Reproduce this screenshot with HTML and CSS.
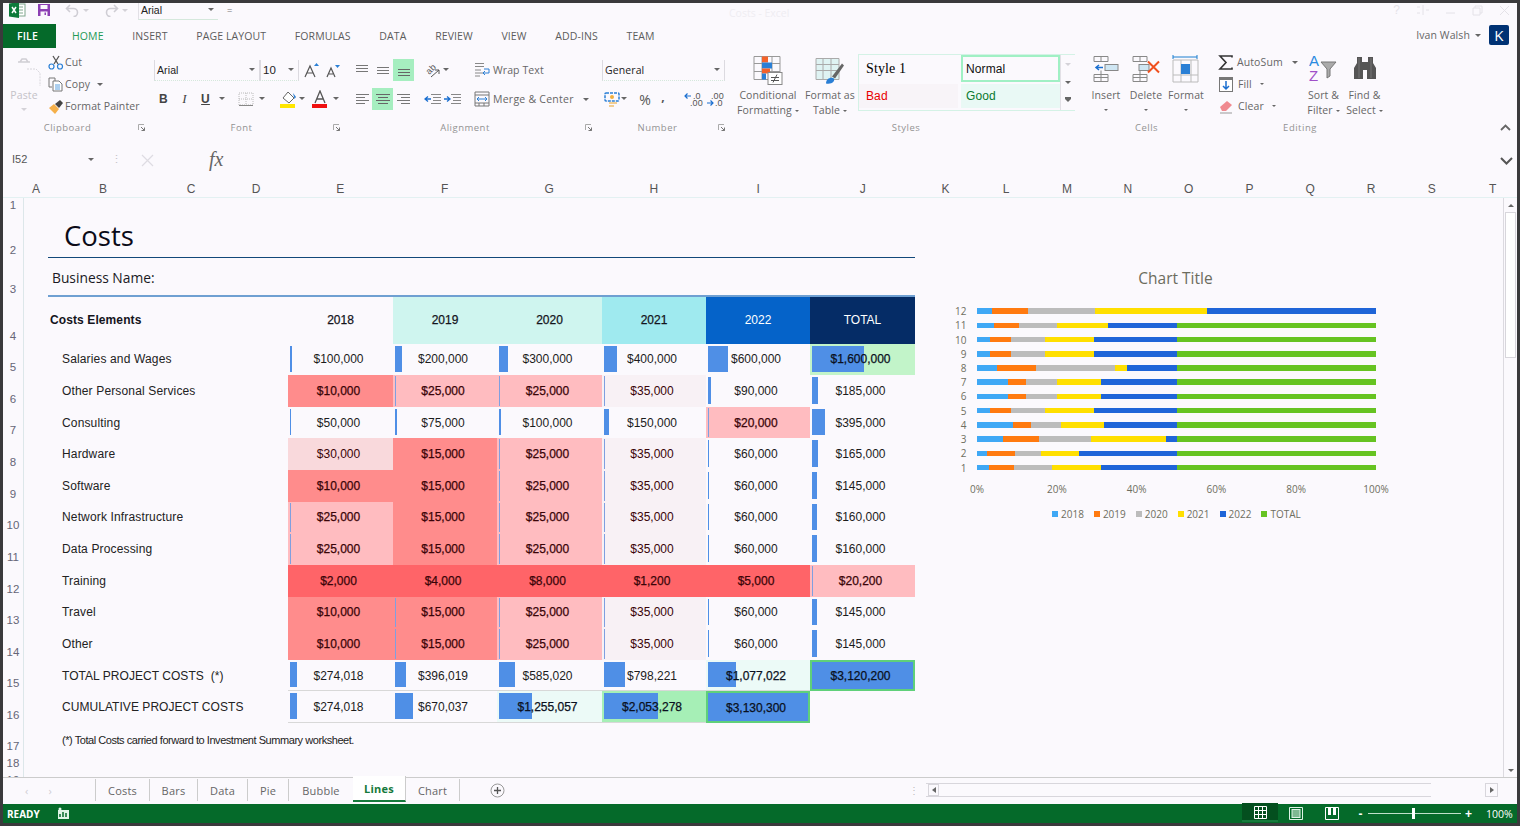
FILE: index.html
```html
<!DOCTYPE html>
<html lang="en">
<head>
<meta charset="utf-8">
<title>Costs - Excel</title>
<link rel="stylesheet" href="styles.css">
</head>
<body>
<div class="win">

<header class="titlebar">
  <svg class="q-excel" width="17" height="16" viewBox="0 0 17 16"><rect x="8" y="2" width="8" height="12" fill="#fff" stroke="#7fa58c"/><path d="M10 5h4M10 8h4M10 11h4" stroke="#7fa58c"/><path d="M0 1.500 10 0v16L0 14.500z" fill="#0d7a3a"/><path d="M3 5l4 6M7 5l-4 6" stroke="#fff" stroke-width="1.500"/></svg>
  <svg class="q-save" width="14" height="14" viewBox="0 0 14 14"><path d="M1 1h12v12H1z" fill="#8c3fb3"/><rect x="3.500" y="2" width="7" height="4" fill="#fbf9fd"/><rect x="3.500" y="8.500" width="7" height="4.500" fill="#fbf9fd"/><rect x="7.500" y="9.500" width="1.500" height="2.500" fill="#8c3fb3"/></svg>
  <svg class="q-undo" width="15" height="13" viewBox="0 0 15 13"><path d="M5 1 1.500 4.500 5 8M2 4.500h6.500a4 4 0 0 1 0 8" fill="none" stroke="#cfcdd4" stroke-width="1.600"/></svg>
  <i class="caret pale q-c1"></i>
  <svg class="q-redo" width="15" height="13" viewBox="0 0 15 13"><path d="M10 1l3.500 3.500L10 8M13 4.500H6.500a4 4 0 0 0 0 8" fill="none" stroke="#cfcdd4" stroke-width="1.600"/></svg>
  <i class="caret pale q-c2"></i>
  <div class="q-font"><span>Arial</span><i class="caret"></i></div>
  <span class="q-more">=</span>
  <span class="doc-title">Costs - Excel</span>
  <div class="winbtns">
    <span>?</span>
    <svg width="13" height="10" viewBox="0 0 13 10"><path d="M1 2h3M1 8h3M7 0v10M10 5h3" stroke="#e4e2e8"/></svg>
    <svg width="11" height="10" viewBox="0 0 11 10"><path d="M1 8h9" stroke="#e4e2e8"/></svg>
    <svg width="11" height="11" viewBox="0 0 11 11"><path d="M1 3h7v7H1zM3 3V1h7v7H8" fill="none" stroke="#e4e2e8"/></svg>
    <svg width="11" height="11" viewBox="0 0 11 11"><path d="M1 1l9 9M10 1l-9 9" stroke="#e4e2e8"/></svg>
  </div>
</header>

<nav class="tabs">
  <span class="tab-file">FILE</span>
  <span class="tab home">HOME</span>
  <span class="tab">INSERT</span>
  <span class="tab">PAGE LAYOUT</span>
  <span class="tab">FORMULAS</span>
  <span class="tab">DATA</span>
  <span class="tab">REVIEW</span>
  <span class="tab">VIEW</span>
  <span class="tab">ADD-INS</span>
  <span class="tab">TEAM</span>
  <div class="user"><span>Ivan Walsh</span><i class="caret"></i><b class="avatar">K</b></div>
</nav>

<section class="ribbon">
  <div class="grp g-clip">
    <div class="gbody clip-body">
      <div class="paste">
        <svg width="30" height="33" viewBox="0 0 30 33"><path d="M6 8h12M8 8l2-3h4l2 3" fill="none" stroke="#d0ced4" stroke-width="1.500"/><path d="M15 15h9l4 4v13" fill="none" stroke="#d8d6dc" stroke-dasharray="2 1"/></svg>
        <span>Paste</span>
        <i class="caret pale"></i>
      </div>
      <div class="clip-list">
        <div class="li"><svg width="16" height="15" viewBox="0 0 16 15"><path d="M5 1l5 8M11 1 6 9" stroke="#555" stroke-width="1.300"/><circle cx="3.500" cy="11.500" r="2.500" fill="none" stroke="#2a7fd5" stroke-width="1.200"/><circle cx="12" cy="11.500" r="2.500" fill="none" stroke="#2a7fd5" stroke-width="1.200"/></svg><span>Cut</span></div>
        <div class="li"><svg width="16" height="15" viewBox="0 0 16 15"><path d="M1 1h6v3M1 1v9h3" fill="none" stroke="#777"/><path d="M5 4h6l3 3v7H5z" fill="#fff" stroke="#777"/><path d="M7 8h5M7 10h5M7 12h5" stroke="#5aa0e0"/></svg><span>Copy</span><i class="caret ml"></i></div>
        <div class="li"><svg width="16" height="15" viewBox="0 0 16 15"><path d="M1 9l5-4 5 5-4 5z" fill="#f5b04a"/><path d="M7 5l5-4 3 3-4 5z" fill="#444"/></svg><span>Format Painter</span></div>
      </div>
    </div>
    <div class="glabel launch"><span>Clipboard</span><svg class="launcher" width="7" height="7" viewBox="0 0 7 7"><path d="M.5 6V.5H6" fill="none" stroke="#aaa"/><path d="M3 3l3.500 3.500M6.500 3.500v3h-3" fill="none" stroke="#777"/></svg></div>
  </div>

  <div class="grp g-font">
    <div class="gbody two">
      <div class="r r-font1">
        <div class="box b-font"><span>Arial</span><i class="caret"></i></div>
        <div class="box b-size"><span>10</span><i class="caret"></i></div>
        <svg class="grow" width="16" height="15" viewBox="0 0 16 15"><path d="M1 14 6 3l5 11M3 10h6" fill="none" stroke="#555" stroke-width="1.200"/><path d="M10 3l2.500-3L15 3z" fill="#2a7fd5"/></svg>
        <svg class="shrink" width="14" height="13" viewBox="0 0 14 13"><path d="M1 12l4-9 4 9M3 9h4" fill="none" stroke="#555" stroke-width="1.200"/><path d="M9 0h5l-2.500 3z" fill="#2a7fd5"/></svg>
      </div>
      <div class="r r-font2">
        <b class="btn fb">B</b><em class="btn fi">I</em><u class="btn fu">U</u><i class="caret cw12"></i>
        <svg class="i-border" width="20" height="16" viewBox="0 0 20 16"><path d="M3 2h14v12H3zM10 2v12M3 8h14" fill="none" stroke="#bbb" stroke-dasharray="1 1"/><path d="M3 14.500h14" stroke="#888"/></svg><i class="caret cw12"></i>
        <svg class="i-fill" width="20" height="19" viewBox="0 0 20 19"><path d="M5 8l5-6 6 6-5 5z" fill="#fff" stroke="#666"/><path d="M15 3l3 4-1.500 2z" fill="#2a7fd5"/><rect x="2" y="14" width="15" height="4" fill="#ffe600"/></svg><i class="caret cw10"></i>
        <svg class="i-color" width="20" height="19" viewBox="0 0 20 19"><path d="M5 13 10 1l5 12M7 9h6" fill="none" stroke="#555" stroke-width="1.300"/><rect x="2" y="14" width="15" height="4" fill="#f01010"/></svg><i class="caret cw12"></i>
      </div>
    </div>
    <div class="glabel launch"><span>Font</span><svg class="launcher" width="7" height="7" viewBox="0 0 7 7"><path d="M.5 6V.5H6" fill="none" stroke="#aaa"/><path d="M3 3l3.500 3.500M6.500 3.500v3h-3" fill="none" stroke="#777"/></svg></div>
  </div>

  <div class="grp g-align">
    <div class="gbody two">
      <div class="r r-al">
        <span class="btn"><svg width="14" height="10" viewBox="0 0 14 10"><path d="M1 .5h12M1 3.500h12M1 6.500h12" stroke="#777"/></svg></span>
        <span class="btn"><svg width="14" height="10" viewBox="0 0 14 10"><path d="M1 2.500h12M1 5.500h12M1 8.500h12" stroke="#777"/></svg></span>
        <span class="btn hl"><svg width="14" height="12" viewBox="0 0 14 12"><path d="M1 5.500h12M1 8.500h12M1 11.500h12" stroke="#666"/></svg></span>
        <svg class="i-orient" width="20" height="20" viewBox="-2 -4 20 20"><text x="2" y="9" transform="rotate(-45 6 6)" class="tiny ab">ab</text><path d="M7 13l8-7M15 6h-4M15 6v4" fill="none" stroke="#555"/></svg><i class="caret cw8"></i>
        <svg class="i-wrap" width="16" height="16" viewBox="0 0 16 16"><path d="M1 1.500h9M1 4.500h9M1 8h6M1 11h8M1 14h5" stroke="#888"/><path d="M10 7h5v4H9M11 9l-2 2 2 2" fill="none" stroke="#2a7fd5"/></svg>
        <span class="txt">Wrap Text</span>
      </div>
      <div class="r r-al">
        <span class="btn"><svg width="14" height="11" viewBox="0 0 14 11"><path d="M1 .5h13M1 3.500h9M1 6.500h13M1 9.500h9" stroke="#777"/></svg></span>
        <span class="btn hl"><svg width="14" height="11" viewBox="0 0 14 11"><path d="M0 .5h14M2 3.500h10M0 6.500h14M2 9.500h10" stroke="#666"/></svg></span>
        <span class="btn"><svg width="14" height="11" viewBox="0 0 14 11"><path d="M0 .5h13M4 3.500h9M0 6.500h13M4 9.500h9" stroke="#777"/></svg></span>
        <svg class="i-ded" width="18" height="11" viewBox="0 0 18 11"><path d="M7 .5h10M9 3.500h8M9 6.500h8M7 9.500h10" stroke="#888"/><path d="M7 5H1M4 2.500 1 5l3 2.500" fill="none" stroke="#1a6fd0" stroke-width="1.300"/></svg>
        <svg class="i-ind" width="18" height="11" viewBox="0 0 18 11"><path d="M7 .5h10M9 3.500h8M9 6.500h8M7 9.500h10" stroke="#888"/><path d="M0 5h6M3 2.500 6 5 3 7.500" fill="none" stroke="#1a6fd0" stroke-width="1.300"/></svg>
        <svg class="i-merge" width="16" height="16" viewBox="0 0 16 16"><path d="M1 1h14v14H1zM1 4h14M1 12h14M5 12v3M10 12v3" fill="none" stroke="#777"/><path d="M3 8h10M5 6 3 8l2 2M11 6l2 2-2 2" fill="none" stroke="#2a7fd5"/></svg>
        <span class="txt wide">Merge &amp; Center</span><i class="caret c-merge"></i>
      </div>
    </div>
    <div class="glabel launch"><span>Alignment</span><svg class="launcher" width="7" height="7" viewBox="0 0 7 7"><path d="M.5 6V.5H6" fill="none" stroke="#aaa"/><path d="M3 3l3.500 3.500M6.500 3.500v3h-3" fill="none" stroke="#777"/></svg></div>
  </div>

  <div class="grp g-num">
    <div class="gbody two">
      <div class="r r-num1"><div class="box b-gen"><span>General</span><i class="caret"></i></div></div>
      <div class="r r-num2">
        <svg class="i-cur" width="16" height="15" viewBox="0 0 16 15"><rect x="1" y="1" width="14" height="8" rx="1" fill="none" stroke="#2a7fd5" stroke-width="1.500" stroke-dasharray="3 1"/><circle cx="8" cy="5" r="2" fill="#f0b040"/><path d="M5 11h8M5 14h5" stroke="#f0c070" stroke-width="1.500"/></svg><i class="caret cw10"></i>
        <span class="pct">%</span><span class="comma">,</span>
        <svg class="i-inc" width="19" height="15" viewBox="0 0 19 15"><path d="M7 4H1M3.500 1.500 1 4l2.500 2.500" fill="none" stroke="#1a6fd0" stroke-width="1.200"/><text x="9" y="7" class="tiny">.0</text><text x="6" y="14" class="tiny">.00</text></svg>
        <svg class="i-dec" width="19" height="15" viewBox="0 0 19 15"><text x="5" y="7" class="tiny">.00</text><path d="M1 11h6M4.500 8.500 7 11l-2.500 2.500" fill="none" stroke="#1a6fd0" stroke-width="1.200"/><text x="9" y="14" class="tiny">.0</text></svg>
      </div>
    </div>
    <div class="glabel launch"><span>Number</span><svg class="launcher" width="7" height="7" viewBox="0 0 7 7"><path d="M.5 6V.5H6" fill="none" stroke="#aaa"/><path d="M3 3l3.500 3.500M6.500 3.500v3h-3" fill="none" stroke="#777"/></svg></div>
  </div>

  <div class="grp g-styles">
    <div class="gbody styles-body">
      <div class="big b-cf">
        <svg width="30" height="30" viewBox="0 0 30 30"><path d="M1 1h26v23H1zM1 8h26M1 16h26M9 1v23M19 1v23" fill="#fbf9fd" stroke="#999"/><rect x="9" y="1" width="6" height="6" fill="#f4622a"/><rect x="9" y="7" width="10" height="6" fill="#2a7fd5"/><rect x="9" y="13" width="8" height="5" fill="#f4622a"/><rect x="9" y="18" width="4" height="6" fill="#2a7fd5"/><rect x="15" y="17" width="14" height="12" fill="#fff" stroke="#888"/><path d="M18 22h8M18 25h8M24 19l-4 8" stroke="#555"/></svg>
        <span>Conditional</span><span>Formatting<i class="caret ins"></i></span>
      </div>
      <div class="big b-ft">
        <svg width="30" height="30" viewBox="0 0 30 30"><path d="M1 3h23v21H1zM1 9h23M1 15h23M8 3v21M16 3v21" fill="#dff3f3" stroke="#aaa"/><path d="M17 21 27 8l2 2-9 13z" fill="#666"/><path d="M11 28c0-5 5-7 8-5 1 3-2 6-8 5z" fill="#2a7fd5"/></svg>
        <span>Format as</span><span>Table<i class="caret ins"></i></span>
      </div>
      <div class="gallery">
        <div class="g-grid">
          <span class="st st1">Style 1</span>
          <span class="st st2">Normal</span>
          <span class="st st3">Bad</span>
          <span class="st st4">Good</span>
        </div>
        <div class="g-scroll"><i class="caret pale"></i><i class="caret"></i><i class="caret under"></i></div>
      </div>
    </div>
    <div class="glabel"><span>Styles</span></div>
  </div>

  <div class="grp g-cells">
    <div class="gbody cells-body">
      <div class="big"><svg width="26" height="27" viewBox="0 0 26 27"><path d="M1 1h14v5H1zM8 1v5M1 19h14v7H1zM8 15v11M1 22h14" fill="none" stroke="#888"/><rect x="12" y="9" width="13" height="6" fill="#cfe6f3" stroke="#888"/><path d="M10 12H3M6 9.500 3 12l3 2.500" fill="none" stroke="#1a6fd0" stroke-width="1.500"/></svg><span>Insert</span><i class="caret"></i></div>
      <div class="big"><svg width="28" height="27" viewBox="0 0 28 27"><path d="M1 1h14v5H1zM8 1v5M1 19h14v7H1zM8 15v11M1 22h14" fill="none" stroke="#888"/><rect x="7" y="9" width="10" height="6" fill="#cfe6f3" stroke="#888"/><path d="M16 6l11 11M27 6 16 17" stroke="#f0501e" stroke-width="2"/></svg><span>Delete</span><i class="caret"></i></div>
      <div class="big"><svg width="28" height="28" viewBox="0 0 28 28"><path d="M1 5h25v22H1zM9 5v22M19 5v22M1 20h25" fill="none" stroke="#bbb"/><rect x="9" y="9" width="9" height="10" fill="#2a7fd5"/><path d="M1 0v4M25 0v4M1 2h24" stroke="#1a7fd0"/></svg><span>Format</span><i class="caret"></i></div>
    </div>
    <div class="glabel"><span>Cells</span></div>
  </div>

  <div class="grp g-edit">
    <div class="gbody edit-body">
      <div class="edit-list">
        <div class="li e-sum"><svg width="16" height="15" viewBox="0 0 16 15"><path d="M14 2.500V1H2l6 6.500L2 14h12v-1.500" fill="none" stroke="#333" stroke-width="1.600"/></svg><span>AutoSum</span><i class="caret c-auto"></i></div>
        <div class="li e-fill"><svg width="14" height="15" viewBox="0 0 14 15"><rect x=".5" y=".5" width="13" height="14" fill="#fff" stroke="#777"/><path d="M.5 2h13" stroke="#777" stroke-width="2"/><path d="M7 4v8M4 9l3 3 3-3" fill="none" stroke="#1a6fd0" stroke-width="1.500"/></svg><span>Fill</span><i class="caret ins"></i></div>
        <div class="li e-fill"><svg width="14" height="15" viewBox="0 0 14 15"><path d="M1 8l7-6 5 4-6 6H3z" fill="#f08a90"/><path d="M1 14h12" stroke="#999"/></svg><span>Clear</span><i class="caret ins"></i></div>
      </div>
      <div class="big b-sort"><svg width="30" height="32" viewBox="0 -2 30 32"><text x="0" y="12" class="az a">A</text><text x="0" y="27" class="az z">Z</text><path d="M12 8h15l-6 7v7l-3 2v-9z" fill="#aaa" stroke="#777"/></svg><span>Sort &amp;</span><span>Filter<i class="caret ins"></i></span></div>
      <div class="big b-find"><svg width="26" height="26" viewBox="0 0 26 26"><path d="M5 2h5v5h6V2h5v6l3 5v11h-9v-9h-4v9H2V13l3-5z" fill="#555"/><path d="M7 3v20M19 3v20" stroke="#777"/></svg><span>Find &amp;</span><span>Select<i class="caret ins"></i></span></div>
    </div>
    <div class="glabel"><span>Editing</span></div>
  </div>

  <svg class="collapse" width="11" height="7" viewBox="0 0 11 7"><path d="M1 6l4.500-4.500L10 6" fill="none" stroke="#666" stroke-width="1.800"/></svg>
</section>

<section class="formula">
  <span class="namebox">I52</span><i class="caret nb-c"></i>
  <span class="fdots">⋮</span>
  <svg class="fx-x" width="13" height="13" viewBox="0 0 13 13"><path d="M1 1l11 11M12 1 1 12" stroke="#dedce2" stroke-width="1.200"/></svg>
  <span class="fx">fx</span>
  <svg class="fchev" width="13" height="8" viewBox="0 0 13 8"><path d="M1 1l5.500 5.500L12 1" fill="none" stroke="#555" stroke-width="2"/></svg>
</section>

<div class="colheads">
  <span class="ca">A</span><span class="cb">B</span><span class="cc">C</span><span class="cd">D</span>
  <span class="ce">E</span><span class="ce">F</span><span class="ce">G</span><span class="ce">H</span><span class="ce">I</span><span class="ce">J</span>
  <span class="ck">K</span><span class="ck">L</span><span class="ck">M</span><span class="ck">N</span><span class="ck">O</span><span class="ck">P</span><span class="ck">Q</span><span class="ck">R</span><span class="ck">S</span><span class="ck">T</span>
</div>

<main class="sheet">
  <div class="grid">
    <div class="rh">1</div>
    <div class="rh">2</div><div class="title">Costs</div>
    <div class="rh">3</div><div class="bizname">Business Name:</div>
    <div class="rh">4</div><div class="hl-label">Costs Elements</div>
    <div class="hd">2018</div><div class="hd h-mint">2019</div><div class="hd h-mint">2020</div><div class="hd h-aqua">2021</div><div class="hd h-blue">2022</div><div class="hd h-navy">TOTAL</div>

    <div class="rh">5</div><div class="lbl">Salaries and Wages</div>
    <div class="c"><i class="bar" style="width:2px"></i><span>$100,000</span></div><div class="c"><i class="bar" style="width:6.500px"></i><span>$200,000</span></div><div class="c"><i class="bar" style="width:9px"></i><span>$300,000</span></div><div class="c"><i class="bar" style="width:13px"></i><span>$400,000</span></div><div class="c"><i class="bar" style="width:20px"></i><span>$600,000</span></div><div class="c g-hi"><i class="bar" style="width:52px"></i><span class="dk">$1,600,000</span></div>

    <div class="rh">6</div><div class="lbl">Other Personal Services</div>
    <div class="c r1"><span>$10,000</span></div><div class="c r3"><i class="bar thin"></i><span>$25,000</span></div><div class="c r3"><i class="bar thin"></i><span>$25,000</span></div><div class="c r5"><i class="bar thin"></i><span>$35,000</span></div><div class="c"><i class="bar" style="width:2.500px"></i><span>$90,000</span></div><div class="c"><i class="bar" style="width:5.500px"></i><span>$185,000</span></div>

    <div class="rh">7</div><div class="lbl">Consulting</div>
    <div class="c"><i class="bar" style="width:1px"></i><span>$50,000</span></div><div class="c"><i class="bar" style="width:1.500px"></i><span>$75,000</span></div><div class="c"><i class="bar" style="width:2px"></i><span>$100,000</span></div><div class="c"><i class="bar" style="width:4.500px"></i><span>$150,000</span></div><div class="c r3"><i class="bar thin"></i><span>$20,000</span></div><div class="c"><i class="bar" style="width:13px"></i><span>$395,000</span></div>

    <div class="rh">8</div><div class="lbl">Hardware</div>
    <div class="c r4"><span>$30,000</span></div><div class="c r1"><span>$15,000</span></div><div class="c r3"><i class="bar thin"></i><span>$25,000</span></div><div class="c r5"><i class="bar thin"></i><span>$35,000</span></div><div class="c"><i class="bar" style="width:1px"></i><span>$60,000</span></div><div class="c"><i class="bar" style="width:5.500px"></i><span>$165,000</span></div>

    <div class="rh">9</div><div class="lbl">Software</div>
    <div class="c r1"><span>$10,000</span></div><div class="c r1"><span>$15,000</span></div><div class="c r3"><i class="bar thin"></i><span>$25,000</span></div><div class="c r5"><i class="bar thin"></i><span>$35,000</span></div><div class="c"><i class="bar" style="width:1px"></i><span>$60,000</span></div><div class="c"><i class="bar" style="width:4.500px"></i><span>$145,000</span></div>

    <div class="rh">10</div><div class="lbl">Network Infrastructure</div>
    <div class="c r3"><i class="bar thin"></i><span>$25,000</span></div><div class="c r1"><span>$15,000</span></div><div class="c r3"><i class="bar thin"></i><span>$25,000</span></div><div class="c r5"><i class="bar thin"></i><span>$35,000</span></div><div class="c"><i class="bar" style="width:1px"></i><span>$60,000</span></div><div class="c"><i class="bar" style="width:5px"></i><span>$160,000</span></div>

    <div class="rh">11</div><div class="lbl">Data Processing</div>
    <div class="c r3"><i class="bar thin"></i><span>$25,000</span></div><div class="c r1"><span>$15,000</span></div><div class="c r3"><i class="bar thin"></i><span>$25,000</span></div><div class="c r5"><i class="bar thin"></i><span>$35,000</span></div><div class="c"><i class="bar" style="width:1px"></i><span>$60,000</span></div><div class="c"><i class="bar" style="width:5px"></i><span>$160,000</span></div>

    <div class="rh">12</div><div class="lbl">Training</div>
    <div class="c r2"><span>$2,000</span></div><div class="c r2"><span>$4,000</span></div><div class="c r2"><span>$8,000</span></div><div class="c r2"><span>$1,200</span></div><div class="c r2"><span>$5,000</span></div><div class="c r3"><i class="bar thin"></i><span>$20,200</span></div>

    <div class="rh">13</div><div class="lbl">Travel</div>
    <div class="c r1"><span>$10,000</span></div><div class="c r1"><i class="bar thin"></i><span>$15,000</span></div><div class="c r3"><i class="bar thin"></i><span>$25,000</span></div><div class="c r5"><i class="bar thin"></i><span>$35,000</span></div><div class="c"><i class="bar" style="width:1px"></i><span>$60,000</span></div><div class="c"><i class="bar" style="width:4.500px"></i><span>$145,000</span></div>

    <div class="rh">14</div><div class="lbl">Other</div>
    <div class="c r1"><span>$10,000</span></div><div class="c r1"><i class="bar thin"></i><span>$15,000</span></div><div class="c r3"><i class="bar thin"></i><span>$25,000</span></div><div class="c r5"><i class="bar thin"></i><span>$35,000</span></div><div class="c"><i class="bar" style="width:1px"></i><span>$60,000</span></div><div class="c"><i class="bar" style="width:4.500px"></i><span>$145,000</span></div>

    <div class="rh">15</div><div class="lbl tot">TOTAL PROJECT COSTS&nbsp; (*)</div>
    <div class="c ln"><i class="bar" style="width:6.500px"></i><span>$274,018</span></div><div class="c ln"><i class="bar" style="width:10.500px"></i><span>$396,019</span></div><div class="c ln"><i class="bar" style="width:15.500px"></i><span>$585,020</span></div><div class="c ln"><i class="bar" style="width:21px"></i><span>$798,221</span></div><div class="c ln g-pale"><i class="bar" style="width:28px"></i><span class="dk">$1,077,022</span></div><div class="c ln full"><span class="dk">$3,120,200</span></div>

    <div class="rh">16</div><div class="lbl tot">CUMULATIVE PROJECT COSTS</div>
    <div class="c ln"><i class="bar" style="width:6.500px"></i><span>$274,018</span></div><div class="c ln"><i class="bar" style="width:17.500px"></i><span>$670,037</span></div><div class="c ln g-pale"><i class="bar" style="width:33px"></i><span class="dk">$1,255,057</span></div><div class="c ln g-hi2"><i class="bar" style="width:54px"></i><span class="dk">$2,053,278</span></div><div class="c ln full"><span class="dk">$3,130,300</span></div>

    <div class="rh">17</div><div class="note">(*) Total Costs carried forward to Investment Summary worksheet.</div>
    <div class="rh">18</div>
    <div class="rh">19</div>
  </div>

  <figure class="chart">
    <figcaption>Chart Title</figcaption>
    <div class="plot">
      <div class="pr"><span class="yl">12</span><div class="stack"><i class="s1" style="flex-grow:46"></i><i class="s2" style="flex-grow:108"></i><i class="s3" style="flex-grow:201"></i><i class="s4" style="flex-grow:334"></i><i class="s5" style="flex-grow:507"></i></div></div>
      <div class="pr"><span class="yl">11</span><div class="stack"><i class="s1" style="flex-grow:50"></i><i class="s2" style="flex-grow:77"></i><i class="s3" style="flex-grow:112"></i><i class="s4" style="flex-grow:154"></i><i class="s5" style="flex-grow:205"></i><i class="s6" style="flex-grow:598"></i></div></div>
      <div class="pr"><span class="yl">10</span><div class="stack"><i class="s1" style="flex-grow:40"></i><i class="s2" style="flex-grow:62"></i><i class="s3" style="flex-grow:103"></i><i class="s4" style="flex-grow:145"></i><i class="s5" style="flex-grow:248"></i><i class="s6" style="flex-grow:598"></i></div></div>
      <div class="pr"><span class="yl">9</span><div class="stack"><i class="s1" style="flex-grow:40"></i><i class="s2" style="flex-grow:62"></i><i class="s3" style="flex-grow:103"></i><i class="s4" style="flex-grow:145"></i><i class="s5" style="flex-grow:248"></i><i class="s6" style="flex-grow:598"></i></div></div>
      <div class="pr"><span class="yl">8</span><div class="stack"><i class="s1" style="flex-grow:59"></i><i class="s2" style="flex-grow:118"></i><i class="s3" style="flex-grow:236"></i><i class="s4" style="flex-grow:37"></i><i class="s5" style="flex-grow:148"></i><i class="s6" style="flex-grow:598"></i></div></div>
      <div class="pr"><span class="yl">7</span><div class="stack"><i class="s1" style="flex-grow:94"></i><i class="s2" style="flex-grow:54"></i><i class="s3" style="flex-grow:93"></i><i class="s4" style="flex-grow:132"></i><i class="s5" style="flex-grow:225"></i><i class="s6" style="flex-grow:598"></i></div></div>
      <div class="pr"><span class="yl">6</span><div class="stack"><i class="s1" style="flex-grow:94"></i><i class="s2" style="flex-grow:54"></i><i class="s3" style="flex-grow:93"></i><i class="s4" style="flex-grow:132"></i><i class="s5" style="flex-grow:225"></i><i class="s6" style="flex-grow:598"></i></div></div>
      <div class="pr"><span class="yl">5</span><div class="stack"><i class="s1" style="flex-grow:40"></i><i class="s2" style="flex-grow:62"></i><i class="s3" style="flex-grow:103"></i><i class="s4" style="flex-grow:145"></i><i class="s5" style="flex-grow:248"></i><i class="s6" style="flex-grow:598"></i></div></div>
      <div class="pr"><span class="yl">4</span><div class="stack"><i class="s1" style="flex-grow:107"></i><i class="s2" style="flex-grow:55"></i><i class="s3" style="flex-grow:91"></i><i class="s4" style="flex-grow:129"></i><i class="s5" style="flex-grow:216"></i><i class="s6" style="flex-grow:598"></i></div></div>
      <div class="pr"><span class="yl">3</span><div class="stack"><i class="s1" style="flex-grow:77"></i><i class="s2" style="flex-grow:110"></i><i class="s3" style="flex-grow:154"></i><i class="s4" style="flex-grow:226"></i><i class="s5" style="flex-grow:31"></i><i class="s6" style="flex-grow:598"></i></div></div>
      <div class="pr"><span class="yl">2</span><div class="stack"><i class="s1" style="flex-grow:30"></i><i class="s2" style="flex-grow:83"></i><i class="s3" style="flex-grow:80"></i><i class="s4" style="flex-grow:114"></i><i class="s5" style="flex-grow:291"></i><i class="s6" style="flex-grow:598"></i></div></div>
      <div class="pr"><span class="yl">1</span><div class="stack"><i class="s1" style="flex-grow:36"></i><i class="s2" style="flex-grow:74"></i><i class="s3" style="flex-grow:114"></i><i class="s4" style="flex-grow:149"></i><i class="s5" style="flex-grow:225"></i><i class="s6" style="flex-grow:598"></i></div></div>
    </div>
    <div class="xaxis"><span>0%</span><span>20%</span><span>40%</span><span>60%</span><span>80%</span><span>100%</span></div>
    <div class="legend">
      <span><i class="s1"></i>2018</span><span><i class="s2"></i>2019</span><span><i class="s3"></i>2020</span><span><i class="s4"></i>2021</span><span><i class="s5"></i>2022</span><span><i class="s6"></i>TOTAL</span>
    </div>
  </figure>

  <aside class="vscroll">
    <div class="sb-btn"><i class="caret up"></i></div>
    <div class="sb-thumb"></div>
    <div class="sb-track"></div>
    <div class="sb-btn"><i class="caret"></i></div>
  </aside>
</main>

<footer class="sheetbar">
  <div class="tabnav"><span>‹</span><span>›</span></div>
  <span class="st-tab">Costs</span><span class="st-tab">Bars</span><span class="st-tab">Data</span><span class="st-tab">Pie</span><span class="st-tab nb">Bubble</span><span class="st-tab on">Lines</span><span class="st-tab">Chart</span>
  <svg class="addsheet" width="15" height="15" viewBox="0 0 15 15"><circle cx="7.500" cy="7.500" r="6.500" fill="none" stroke="#999"/><path d="M4 7.500h7M7.500 4v7" stroke="#555" stroke-width="1.300"/></svg>
  <span class="hdots">⋮</span>
  <div class="hscroll"><div class="hleft"><i class="caret left"></i></div></div>
  <div class="hright"><i class="caret right"></i></div>
</footer>

<footer class="status">
  <span class="ready">READY</span>
  <svg class="macro" width="13" height="13" viewBox="0 0 13 13"><rect x="1" y="3" width="11" height="9" fill="#dff3e6"/><path d="M3 10V7M6 10V5M9 10V6" stroke="#056a2a" stroke-width="1.500"/><circle cx="3" cy="2" r="1.500" fill="#dff3e6"/></svg>
  <div class="views">
    <span class="v on"><svg width="13" height="13" viewBox="0 0 13 13"><path d="M.5.500h12v12H.5zM4.500.500v12M8.500.500v12M.5 4.500h12M.5 8.500h12" fill="none" stroke="#fff"/></svg></span>
    <span class="v"><svg width="14" height="13" viewBox="0 0 14 13"><path d="M.5.500h13v12H.5z" fill="none" stroke="#dff3e6"/><rect x="3" y="2.500" width="8" height="8" fill="#7fb892" stroke="#dff3e6"/></svg></span>
    <span class="v"><svg width="14" height="13" viewBox="0 0 14 13"><path d="M.5.500h13v12H.5z" fill="none" stroke="#fff"/><path d="M3 1h3v7H3zM8 1h3v7H8z" fill="#fff"/></svg></span>
  </div>
  <div class="zoom"><b>-</b><div class="slider"><i></i></div><b>+</b></div>
  <span class="pctz">100%</span>
</footer>
</div>
</body>
</html>
```

FILE: styles.css
```css
*{box-sizing:border-box}
html,body{margin:0;height:100%;overflow:hidden}
body{background:#3a3a3c;font-family:"Liberation Sans",Arial,sans-serif}
i,em{font-style:normal}
.win{margin:3px 0 0 3px;width:1514px;height:820px;background:#fbf9fd;display:flex;flex-direction:column;overflow:hidden}

.caret{display:inline-block;width:0;height:0;border:3px solid transparent;border-top:3.5px solid #666;border-bottom:0;flex:none}
.caret.pale{border-top-color:#d4d2d8}
.caret.ins{margin-left:3px;vertical-align:2px;border-width:2.5px;border-bottom:0}
.caret.up{border-top:0;border-bottom:3.5px solid #666}
.caret.left{border:3px solid transparent;border-left:0;border-right:4px solid #666}
.caret.right{border:3px solid transparent;border-right:0;border-left:4px solid #666}

/* title bar */
.titlebar{height:21px;flex:none;display:flex;align-items:center;position:relative;padding-bottom:7px}
.q-excel{margin-left:6px}
.q-save{margin-left:11px}
.q-undo{margin-left:14px}
.q-c1{margin-left:3px}
.q-redo{margin-left:15px}
.q-c2{margin-left:3px}
.q-font{margin-left:10px;width:80px;height:20px;display:flex;align-items:center;justify-content:space-between;padding:0 4px 0 2px;font-size:10.5px;color:#222;border-bottom:1px solid #d5e8dc;border-left:1px solid #e2e0e6}
.q-more{margin-left:9px;font-size:9px;color:#777}
.doc-title{position:absolute;left:726px;top:3px;font:10.5px "Open Sans",sans-serif;color:#efedf2;white-space:nowrap}
.winbtns{margin-left:auto;display:flex;align-items:center;gap:16px;padding-right:7px;color:#e4e2e8;font-size:12px}

/* tabs */
.tabs{height:24px;flex:none;display:flex;align-items:center;font:10.5px "Open Sans",sans-serif;color:#5c5c5c;letter-spacing:.1px}
.tab-file{width:53px;height:24px;background:#056a2a;color:#fff;display:flex;align-items:center;justify-content:center;font-weight:600;padding-right:4px}
.tab{margin-left:28.7px;white-space:nowrap}
.tab.home{margin-left:16px;color:#1e9a55}
.user{margin-left:auto;display:flex;align-items:center;gap:5px;padding-right:8px;color:#666;margin-top:-2px}
.avatar{width:20px;height:20px;margin-left:3px;background:#003274;color:#fff;font:400 15px "Open Sans",sans-serif;display:flex;align-items:center;justify-content:center;border-radius:2px}

/* ribbon */
.ribbon{height:99px;flex:none;display:flex;font:10.5px "Open Sans",sans-serif;color:#666;letter-spacing:.1px}
.grp{display:flex;flex-direction:column;flex:none}
.gbody{height:71px;flex:none}
.glabel{height:17px;display:flex;align-items:center;color:#939393;font-size:9.5px;letter-spacing:.5px}
.glabel span{flex:1;text-align:center}
.launcher{margin:0 5px 0 0;flex:none}
.g-clip{width:147px}.g-font{width:195px}.g-align{width:252px}.g-num{width:133px}.g-styles{width:350px}.g-cells{width:130px}.g-edit{width:190px}
.g-clip .glabel span{padding-right:6px}
.g-cells .glabel span{padding-left:3px}
.g-styles .glabel span{padding-left:2px}
.g-edit .glabel{padding-right:10px}
.clip-body{display:flex;padding:3px 0 0 5px}
.paste{width:40px;display:flex;flex-direction:column;align-items:center;padding:3px 8px 0 0;color:#c4c2c8}
.paste svg{margin-left:6px}
.paste span{margin-top:1px}
.paste .caret{margin-top:6px}
.li{height:22px;display:flex;align-items:center;gap:1px;white-space:nowrap}
.li svg{flex:none}
.ml{margin-left:6px}
.two{padding-top:11px;display:flex;flex-direction:column;gap:7px}
.r{height:22px;display:flex;align-items:center;flex:none}
.box{height:21px;display:flex;align-items:center;justify-content:space-between;padding:0 4px 0 2px;border-left:1px solid #dcdae0;border-right:1px solid #dcdae0;border-bottom:1px dotted #d5e8dc;color:#222;font-size:10.5px}
.b-font{width:106px;margin-left:4px;font-family:"Liberation Sans",sans-serif}
.b-size{width:39px;font-family:"Liberation Sans",sans-serif;font-size:11.5px}
.grow{margin-left:5px}
.shrink{margin-left:6px;margin-top:2px}
.btn{width:21px;height:22px;display:flex;align-items:center;justify-content:center;flex:none;text-decoration:none;color:#444}
.hl{background:#a6eec0}
.r-font2{padding-left:3px}
.fb{font:700 12px "Liberation Sans",sans-serif}
.fi{font:italic 13px "Liberation Serif",serif}
.fu{font:700 12px "Liberation Sans",sans-serif;text-decoration:underline}
.cw12{width:12px;border:none;position:relative}
.cw12::after,.cw10::after,.cw8::after{content:"";position:absolute;left:3px;top:-2px;border:3px solid transparent;border-top:3.5px solid #666;border-bottom:0}
.cw10{width:10px;border:none;position:relative}
.cw8{width:8px;border:none;position:relative}
.cw10::after,.cw8::after{left:1px}
.i-border{margin-left:8px}
.i-fill{margin-left:10px}
.i-color{margin-left:2px}
.r-al{padding-left:6px}
.i-orient{margin-left:8px}
.i-wrap{margin-left:24px}
.txt{margin-left:3px;white-space:nowrap}
.txt.wide{letter-spacing:.25px}
.ab{font-size:9px}
.i-ded{margin-left:10px}
.i-ind{margin-left:2px}
.i-merge{margin-left:12px}
.c-merge{margin-left:9px}
.r-num1{padding-left:5px}
.b-gen{width:123px;font-family:"Open Sans",sans-serif}
.r-num2{padding-left:7px}
.i-cur{margin-left:0}
.pct{margin-left:6px;font-size:14px;width:18px;text-align:center;color:#555}
.comma{width:18px;text-align:center;font-weight:700;font-size:12px;margin-top:-5px;color:#555}
.i-inc{margin-left:12px}
.i-dec{margin-left:3px}
.tiny{font:9px "Liberation Sans",sans-serif;fill:#555}
.styles-body{display:flex;padding:6px 0 0 2px}
.big{display:flex;flex-direction:column;align-items:center;flex:none;line-height:15px;white-space:nowrap;text-align:center}
.big svg{height:33px;margin-bottom:1px}
.b-cf{width:72px}
.b-ft{width:52px}
.gallery{display:flex;margin-left:2px;width:217px;height:57px;border:1px solid #d4f2e6;border-right:none}
.g-grid{width:201px;display:grid;grid-template-columns:102px 99px;grid-template-rows:27px 28px}
.st{display:flex;align-items:center;padding-left:5px}
.st1{font:14px "Liberation Serif",serif;color:#000;padding-left:7px}
.st2{font:12px "Liberation Sans",sans-serif;color:#111;border:2px solid #a0f0c4;padding-left:3px}
.st3{font:12px "Liberation Sans",sans-serif;color:#e80000;background:#f8f4f8;margin:2px 3px 2px 0;padding-left:7px}
.st4{font:12px "Liberation Sans",sans-serif;color:#0a7a30;background:#e9f9f5;margin:2px 0;padding-left:5px}
.g-scroll{width:15px;display:flex;flex-direction:column;align-items:center;justify-content:space-around;border-left:1px solid #e2e0e6}
.under{box-shadow:0 -2px 0 #666}
.cells-body{display:flex;padding:7px 0 0 6px}
.cells-body .big{width:40px}
.cells-body .big svg{height:28px;margin-bottom:5px}
.cells-body .big .caret{margin-top:6px;border-width:2.5px;border-bottom:0}
.edit-body{display:flex;padding:3px 0 0 8px}
.edit-list{width:85px}
.e-sum{gap:3px}
.e-fill{gap:5px}
.e-fill svg{margin-left:1px}
.c-auto{margin-left:6px}
.b-sort,.b-find{width:41px;padding-top:3px}
.b-sort svg{height:32px;margin:-2px 0 4px}
.b-find svg{height:28px;margin-bottom:6px}
.az{font:400 15px "Liberation Sans",sans-serif}
.az.a{fill:#2a8be0}.az.z{fill:#a050c8}
.collapse{margin:76px 6px 0 auto;flex:none}

/* formula */
.formula{height:34px;flex:none;display:flex;align-items:flex-start;padding-top:6px;font:11px "Liberation Sans",sans-serif;color:#555}
.namebox{margin-left:9px;width:76px;height:14px}
.nb-c{margin-top:5px}
.fdots{margin-left:17px;color:#c4c2c8;font-size:11px}
.fx-x{margin-left:19px;margin-top:1px}
.fx{margin-left:55px;margin-top:-5px;font:italic 20px "Liberation Serif",serif;color:#666}
.fchev{margin-left:auto;margin-right:4px;margin-top:4px}

/* column heads */
.colheads{height:16px;flex:none;display:flex;padding-left:21px;font-size:12px;color:#555;line-height:16px;overflow:hidden}
.colheads span{text-align:center;flex:none}
.ca{width:24px}.cb{width:110px}.cc{width:66px}.cd{width:64px}.ce{width:104.5px}.ck{width:60.8px}

/* sheet */
.sheet{height:580px;flex:none;position:relative;display:flex;overflow:hidden;border-top:1px solid #e3f1f2}
.grid{flex:1;display:grid;grid-template-columns:21px 24px 240px 105px 104px 105px 104px 104px 105px;grid-template-rows:15px 45px 38.5px 47px repeat(12,31.64px) 31px 17px 17px;align-content:start}
.rh{grid-column:1;display:flex;align-items:flex-end;justify-content:center;font-size:11.5px;color:#667;padding-bottom:1px;border-right:1px solid #dde7ea;line-height:14px}
.title{grid-column:3/10;display:flex;align-items:flex-end;border-bottom:1px solid #12497a;padding-left:16px;font:27.5px "Open Sans",sans-serif;color:#0b0b18;line-height:40px;padding-bottom:1px}
.bizname{grid-column:3/10;display:flex;align-items:center;padding-left:4px;font:13.8px "Open Sans",sans-serif;color:#1a1a24;border-bottom:2px solid #6fa0d2;padding-top:2px}
.hl-label{grid-column:3;display:flex;align-items:center;padding-left:2px;font:700 12px "Liberation Sans",sans-serif;color:#14141c;letter-spacing:.1px}
.hd{display:flex;align-items:center;justify-content:center;font-size:12px;color:#14141c;-webkit-text-stroke:.25px #14141c}
.h-mint{background:#cff5ef}
.h-aqua{background:#9feaef}
.h-blue{background:#0563c9;color:#fff;-webkit-text-stroke:0}
.h-navy{background:#052c66;color:#fff;-webkit-text-stroke:0}
.lbl{grid-column:3;display:flex;align-items:center;padding-left:14px;font-size:12px;letter-spacing:.15px;color:#222}
.lbl.tot{letter-spacing:.05px}
.c{position:relative;display:flex;align-items:center;justify-content:center;font-size:12px;color:#1c1c1c;padding-right:4px}
.c span{position:relative;letter-spacing:0}
.bar{position:absolute;left:2px;top:2px;bottom:3px;background:#4f8fe6}
.bar.thin{width:1px;top:1px;bottom:1px;background:#7f9fe0}
.r1,.r2,.r3,.r4,.r5{color:#3a0408}
.r1 span,.r2 span,.r3 span,.dk{-webkit-text-stroke:.25px currentColor}
.r1{background:#ff8c8c}
.r2{background:#ff6468}
.r3{background:#ffbcc0}
.r4{background:#f9d9dc}
.r5{background:#f8f1f5}
.g-hi{background:#c2f4c9}
.g-hi2{background:#a6efb6}
.g-pale{background:#ecfaf7}
.ln{border-bottom:1px solid #d8d8d8;color:#1c1c1c;padding-top:1px}
.full{background:#4f8fe6;border:2px solid #5fd07a}
.dk{color:#0a1020}
.note{grid-column:3/10;padding-left:14px;display:flex;align-items:center;font-size:11px;letter-spacing:-.45px;color:#222;white-space:nowrap;padding-top:2px}

/* chart */
.chart{position:absolute;left:937.5px;top:69px;width:460px;margin:0;font:10px "Open Sans",sans-serif;color:#6e6e60}
.chart figcaption{font-size:15.5px;text-align:center;line-height:22px;padding-left:10px;color:#6c6c5e}
.plot{margin-top:15px}
.pr{height:14.22px;display:flex;align-items:center}
.yl{width:26px;text-align:right;font-size:10px;line-height:14px}
.stack{margin-left:10.5px;width:399px;height:5.5px;display:flex}
.stack i{display:block;flex-basis:0}
.s1{background:#3fa8f5}.s2{background:#ff7a10}.s3{background:#bcbcbc}.s4{background:#ffdf00}.s5{background:#1f65d8}.s6{background:#66c322}
.xaxis{margin:7px 0 0 36.5px;width:399px;display:flex;justify-content:space-between;line-height:14px}
.xaxis span{width:0;display:flex;justify-content:center;white-space:nowrap}
.legend{margin-top:11px;padding-left:111.5px;display:flex;gap:10px;line-height:14px}
.legend span{display:flex;align-items:center;gap:3px}
.legend i{width:6px;height:6px;display:block}

/* vscroll */
.vscroll{width:14px;flex:none;display:flex;flex-direction:column;border-left:1px solid #dcdae0}
.sb-btn{height:14px;display:flex;align-items:center;justify-content:center;flex:none}
.sb-thumb{height:146px;margin:0 1px;border:1px solid #d8d6dc;background:#fff;flex:none}
.sb-track{flex:1}

/* sheet bar */
.sheetbar{height:27px;flex:none;display:flex;align-items:center;border-top:1px solid #ccc;font:11px "Open Sans",sans-serif;color:#666;letter-spacing:.2px;padding-bottom:2px}
.tabnav{width:92px;display:flex;gap:20px;padding-left:22px;color:#cfcdd4}
.st-tab{display:flex;align-items:center;justify-content:center;height:22px;border-right:1px solid #ccc;width:54px}
.st-tab:nth-of-type(2){width:48px}
.st-tab:nth-of-type(3){width:50px}
.st-tab:nth-of-type(4){width:41px}
.st-tab:nth-of-type(5){width:64px;border-right:none}
.st-tab:nth-of-type(6){width:53px;border-right:1px solid #ccc}
.st-tab:first-of-type{border-left:1px solid #ccc;width:55px}
.on{height:26px;margin-top:-3px;background:#fff;color:#167a3c;font-weight:700;border-bottom:2px solid #167a3c;padding-top:2px}
.addsheet{margin-left:30px}
.hdots{margin-left:404px;color:#bbb;font-size:10px}
.hscroll{margin-left:7px;width:505px;height:14px;border:1px solid #d8d6dc;border-left:none;border-right:none;padding-left:2px}
.hleft{width:11px;height:12px;border:1px solid #d8d6dc;display:flex;align-items:center;justify-content:center}
.hright{margin-left:54px;width:13px;height:14px;border:1px solid #d8d6dc;display:flex;align-items:center;justify-content:center}

/* status */
.status{height:19px;flex:none;background:#056a2a;display:flex;align-items:center;color:#fff;font:10px "Open Sans",sans-serif}
.ready{margin-left:4px;font-weight:700;font-size:10px}
.macro{margin-left:17px}
.views{margin-left:auto;display:flex;height:19px;align-items:center}
.v{width:36px;height:19px;display:flex;align-items:center;justify-content:center}
.v.on{background:#044f1f}
.zoom{margin-left:7px;width:115px;display:flex;align-items:center;gap:4px}
.zoom b{font:700 12px "Liberation Sans",sans-serif;width:7px;text-align:center}
.slider{flex:1;height:1px;background:#bfe0cb;position:relative}
.slider i{position:absolute;left:44px;top:-5px;width:3px;height:11px;background:#fff}
.pctz{margin-left:14px;width:31px;font-size:10.5px}
```
